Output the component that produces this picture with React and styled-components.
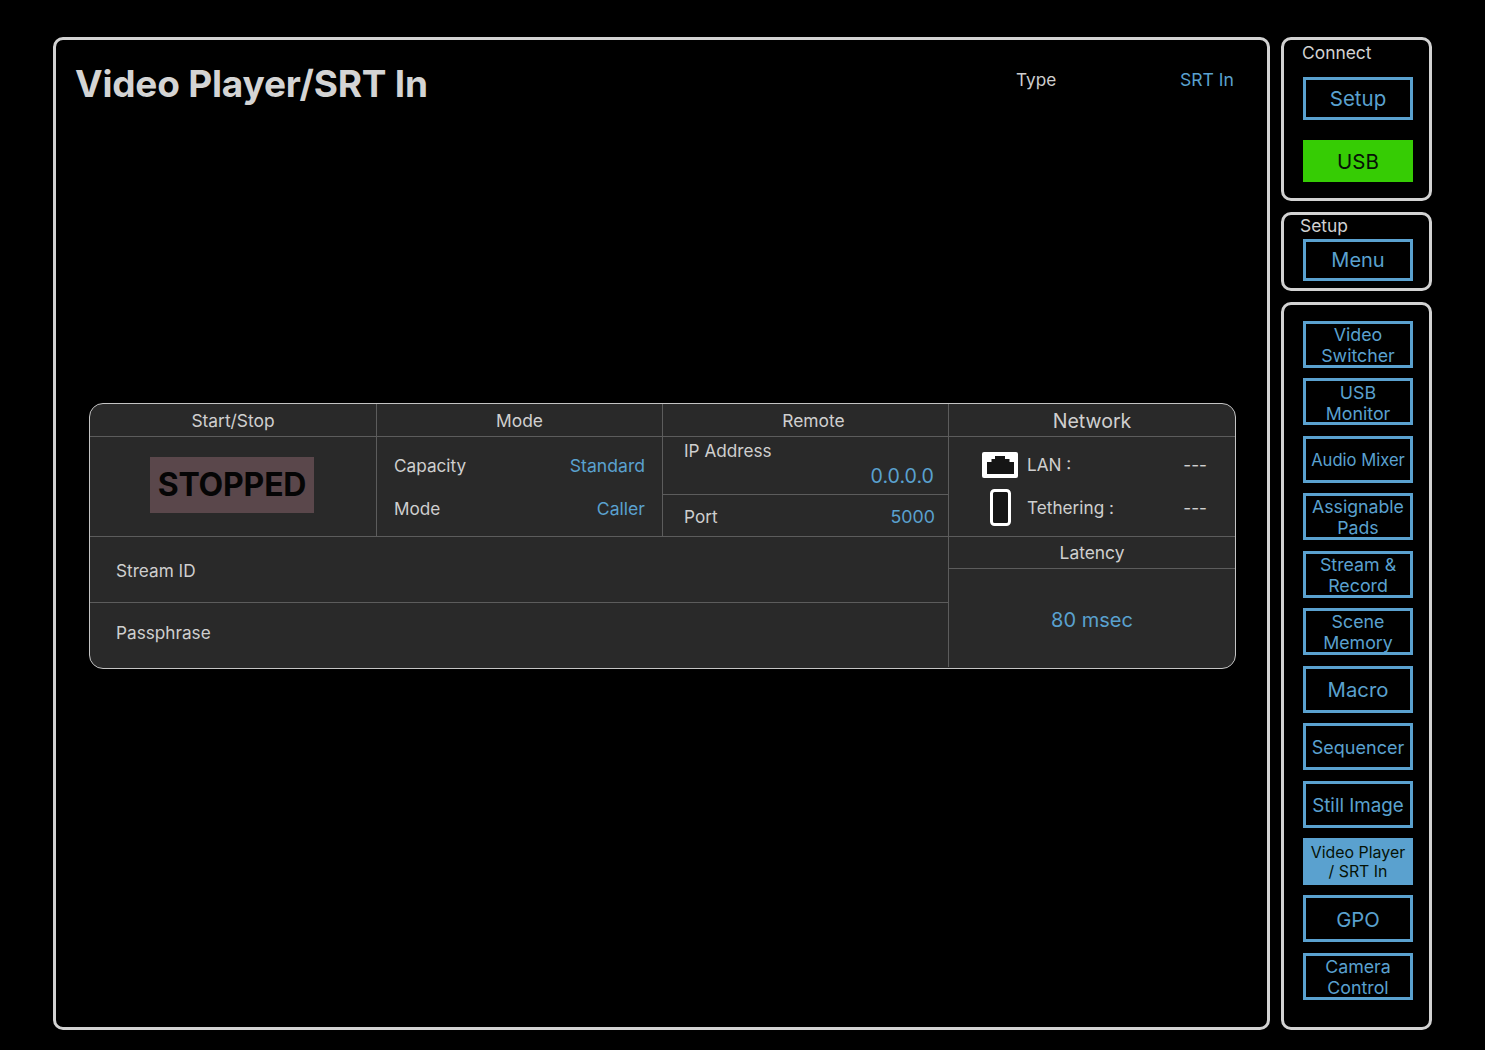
import styled, { createGlobalStyle } from "styled-components";

const GlobalStyle = createGlobalStyle`
  html, body {
    margin: 0;
    padding: 0;
    background: #000;
  }
  body {
    font-family: Inter, "Liberation Sans", sans-serif;
    color: #cfcfcf;
  }
`;

const BLUE = "#5aa1cf";
const LINE = "#5c5c5c";

const Page = styled.div`
  display: flex;
  gap: 11px;
  width: 1485px;
  height: 1050px;
  box-sizing: border-box;
  padding: 37px 53px 20px;
`;

const Panel = styled.div`
  box-sizing: border-box;
  border: 3px solid #d2d2d2;
  border-radius: 10px;
`;

const MainPanel = styled(Panel)`
  width: 1217px;
  height: 993px;
  padding: 0 33px 0 19px;
  display: flex;
  flex-direction: column;
`;

const TitleBar = styled.div`
  display: flex;
  align-items: flex-start;
  height: 363px;
`;

const Title = styled.h1`
  margin: 22px 0 0;
  font-size: 37px;
  line-height: 44px;
  font-weight: 700;
  letter-spacing: -0.2px;
  color: #d4d4d4;
  flex: 1;
`;

const TypeLabel = styled.span`
  margin-top: 29px;
  width: 164px;
  font-size: 17.2px;
  line-height: 22px;
`;

const TypeValue = styled.span`
  margin-top: 29px;
  font-size: 17.6px;
  line-height: 22px;
  color: ${BLUE};
`;

const Table = styled.div`
  box-sizing: border-box;
  width: 1147px;
  height: 265.5px;
  margin-left: 14px;
  background: #292929;
  border: 1.5px solid #c4c4c4;
  border-radius: 14px;
  overflow: hidden;
`;

const TopRow = styled.div`
  display: grid;
  grid-template-columns: 287px 286px 286px 1fr;
  height: 133px;
  border-bottom: 1.5px solid ${LINE};
  box-sizing: border-box;
`;

const Column = styled.div`
  display: flex;
  flex-direction: column;
  min-width: 0;
  border-right: ${(p) => (p.$last ? "none" : `1.5px solid ${LINE}`)};
`;

const ColHead = styled.div`
  box-sizing: border-box;
  height: ${(p) => p.$h || 33}px;
  flex: none;
  display: flex;
  align-items: center;
  justify-content: center;
  padding-top: ${(p) => p.$pad ?? 1}px;
  padding-left: ${(p) => p.$shift || 0}px;
  font-size: ${(p) => (p.$large ? "19.6px" : "17.4px")};
  border-bottom: 1.5px solid ${LINE};
`;

const StartBody = styled.div`
  flex: 1;
  display: flex;
  align-items: center;
  justify-content: center;
  padding: 0 2px 4px 0;
`;

const Stopped = styled.div`
  width: 164px;
  height: 56px;
  background: #5a474b;
  color: #050505;
  font-size: 32px;
  font-weight: 700;
  letter-spacing: -0.2px;
  display: flex;
  align-items: center;
  justify-content: center;
`;

const ModeBody = styled.div`
  flex: 1;
  display: flex;
  flex-direction: column;
  justify-content: center;
  gap: 21px;
  padding: 1px 17px 0;
`;

const Line = styled.div`
  display: flex;
  align-items: center;
  justify-content: space-between;
  font-size: 17.2px;
  line-height: 22px;
`;

const Value = styled.span`
  color: ${BLUE};
  font-size: ${(p) => p.$size || 17.6}px;
`;

const IpCell = styled.div`
  box-sizing: border-box;
  height: 58px;
  padding: 3px 14px 0 21px;
  font-size: 17.2px;
  line-height: 22px;
  border-bottom: 1.5px solid ${LINE};
  display: flex;
  flex-direction: column;
`;

const IpValue = styled(Value)`
  align-self: flex-end;
  line-height: 26px;
  margin-top: 1px;
`;

const PortCell = styled(Line)`
  flex: 1;
  padding: 2px 13px 0 21px;
`;

const NetworkBody = styled.div`
  flex: 1;
  display: flex;
  flex-direction: column;
  padding: 12px 28px 0 33px;
  gap: 9px;
`;

const NetworkLine = styled.div`
  display: flex;
  align-items: center;
  height: ${(p) => p.$h}px;
  font-size: 17.2px;
`;

const IconSlot = styled.div`
  width: 36px;
  margin-right: 9px;
  padding-top: 1px;
  display: flex;
  justify-content: center;
`;

const NetName = styled.span`
  flex: 1;
`;

const BottomRow = styled.div`
  display: grid;
  grid-template-columns: 859px 1fr;
  height: 129.5px;
`;

const FieldStack = styled.div`
  display: flex;
  flex-direction: column;
  border-right: 1.5px solid ${LINE};
`;

const Field = styled.div`
  box-sizing: border-box;
  flex: 1;
  display: flex;
  align-items: center;
  padding-left: 26px;
  font-size: 17.2px;
  &:first-child {
    flex: none;
    height: 65.5px;
    padding-top: 2px;
    border-bottom: 1.5px solid ${LINE};
  }
  &:last-child {
    padding-bottom: 5px;
  }
`;

const LatencyBody = styled.div`
  flex: 1;
  display: flex;
  align-items: center;
  justify-content: center;
  padding-top: 4px;
`;

const Side = styled.div`
  display: flex;
  flex-direction: column;
  gap: 11px;
  width: 151px;
  height: 993px;
`;

const ConnectPanel = styled(Panel)`
  height: 164px;
  padding: 0 19px;
`;

const SetupPanel = styled(Panel)`
  height: 79px;
  padding: 0 19px;
`;

const ModulePanel = styled(Panel)`
  flex: 1;
  padding: 16px 16px 0 19px;
  display: flex;
  flex-direction: column;
  gap: 10.45px;
`;

const PanelLabel = styled.div`
  font-size: 17.4px;
  line-height: 22px;
  margin: ${(p) => p.$margin};
  color: #d2d2d2;
`;

const SideButton = styled.div`
  box-sizing: border-box;
  width: 110px;
  height: ${(p) => p.$h || 47}px;
  flex: none;
  margin-top: ${(p) => p.$top || 0}px;
  padding-top: ${(p) => p.$pad ?? 1}px;
  border: 3px solid ${(p) => p.$fill || BLUE};
  background: ${(p) => p.$fill || "transparent"};
  color: ${(p) => (p.$fill ? "#061206" : BLUE)};
  display: flex;
  align-items: center;
  justify-content: center;
  text-align: center;
  font-size: ${(p) => p.$size || 18}px;
  line-height: ${(p) => p.$lh || 21}px;
  white-space: pre-line;
  overflow: hidden;
`;

const modules = [
  { label: "Video\nSwitcher", size: 17.8 },
  { label: "USB\nMonitor", size: 17.8, pad: 2 },
  { label: "Audio Mixer", size: 16.6, pad: 2 },
  { label: "Assignable\nPads", size: 17.7 },
  { label: "Stream &\nRecord", size: 17.8 },
  { label: "Scene\nMemory", size: 17.8 },
  { label: "Macro", size: 20.3 },
  { label: "Sequencer", size: 18 },
  { label: "Still Image", size: 18.8, pad: 2 },
  { label: "Video Player\n/ SRT In", size: 15.9, lh: 19, fill: BLUE, pad: 2 },
  { label: "GPO", size: 20.3 },
  { label: "Camera\nControl", size: 17.8 },
];

function LanIcon() {
  return (
    <svg width="36" height="26" viewBox="0 0 36 26">
      <rect width="36" height="26" rx="2" fill="#fff" />
      <path d="M5 22V10h4.5V7H13V4h10v3h4.5v3H32v12z" fill="#151515" />
    </svg>
  );
}

function PhoneIcon() {
  return (
    <svg width="21" height="37" viewBox="0 0 21 37">
      <rect x="1.5" y="1.5" width="18" height="34" rx="3" fill="#151515" stroke="#fff" strokeWidth="3" />
    </svg>
  );
}

function App() {
  return (
    <Page>
      <GlobalStyle />
      <MainPanel>
        <TitleBar>
          <Title>Video Player/SRT In</Title>
          <TypeLabel>Type</TypeLabel>
          <TypeValue>SRT In</TypeValue>
        </TitleBar>
        <Table>
          <TopRow>
            <Column>
              <ColHead>Start/Stop</ColHead>
              <StartBody>
                <Stopped>STOPPED</Stopped>
              </StartBody>
            </Column>
            <Column>
              <ColHead>Mode</ColHead>
              <ModeBody>
                <Line>
                  Capacity <Value>Standard</Value>
                </Line>
                <Line>
                  Mode <Value>Caller</Value>
                </Line>
              </ModeBody>
            </Column>
            <Column>
              <ColHead $shift={16}>Remote</ColHead>
              <IpCell>
                IP Address
                <IpValue $size={19.6}>0.0.0.0</IpValue>
              </IpCell>
              <PortCell>
                Port <Value $size={17.8}>5000</Value>
              </PortCell>
            </Column>
            <Column $last>
              <ColHead $large>Network</ColHead>
              <NetworkBody>
                <NetworkLine $h={30}>
                  <IconSlot>
                    <LanIcon />
                  </IconSlot>
                  <NetName>LAN :</NetName>
                  <span>---</span>
                </NetworkLine>
                <NetworkLine $h={38}>
                  <IconSlot>
                    <PhoneIcon />
                  </IconSlot>
                  <NetName>Tethering :</NetName>
                  <span>---</span>
                </NetworkLine>
              </NetworkBody>
            </Column>
          </TopRow>
          <BottomRow>
            <FieldStack>
              <Field>Stream ID</Field>
              <Field>Passphrase</Field>
            </FieldStack>
            <Column $last>
              <ColHead $h={32} $pad={0}>Latency</ColHead>
              <LatencyBody>
                <Value $size={20}>80 msec</Value>
              </LatencyBody>
            </Column>
          </BottomRow>
        </Table>
      </MainPanel>
      <Side>
        <ConnectPanel>
          <PanelLabel $margin="2px 0 -1px -1px">Connect</PanelLabel>
          <SideButton $h={43} $top={14} $size={20.5} $pad={0}>
            Setup
          </SideButton>
          <SideButton $h={42} $top={20} $size={20.5} $fill="#36cc04" $pad={0}>
            USB
          </SideButton>
        </ConnectPanel>
        <SetupPanel>
          <PanelLabel $margin="0 0 0 -3px">Setup</PanelLabel>
          <SideButton $h={42} $size={20} $top={2} $pad={0}>
            Menu
          </SideButton>
        </SetupPanel>
        <ModulePanel>
          {modules.map((m) => (
            <SideButton key={m.label} $size={m.size} $lh={m.lh} $fill={m.fill} $pad={m.pad}>
              {m.label}
            </SideButton>
          ))}
        </ModulePanel>
      </Side>
    </Page>
  );
}

export default App;
